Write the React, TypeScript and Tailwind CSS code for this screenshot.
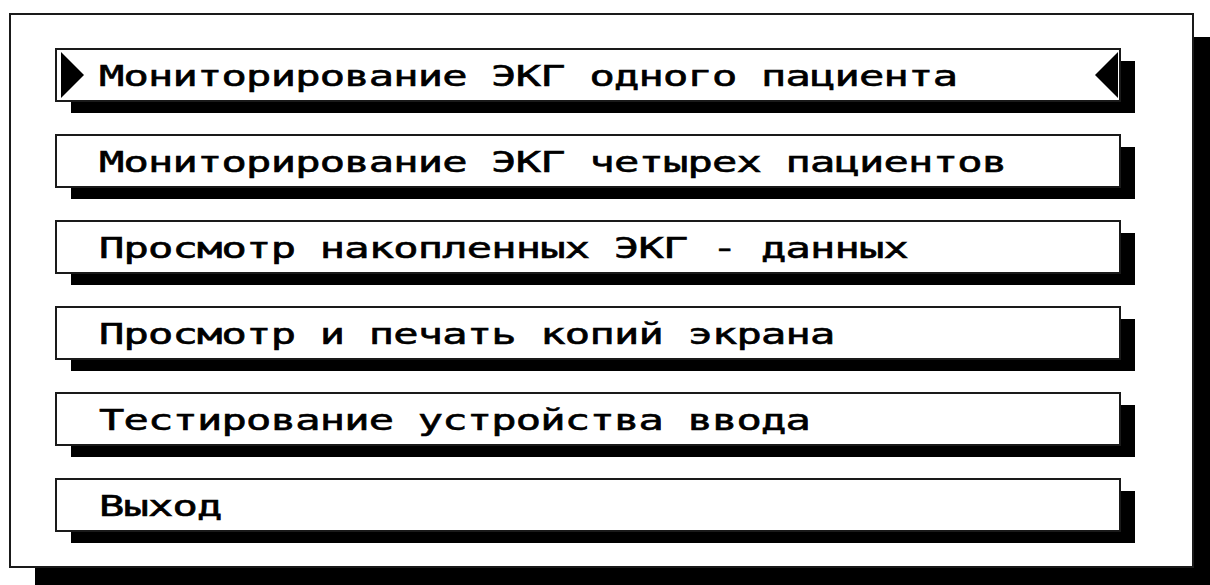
import React from "react";

// Main menu of the ECG monitoring program
const items: string[] = [
  "Мониторирование ЭКГ одного пациента",
  "Мониторирование ЭКГ четырех пациентов",
  "Просмотр накопленных ЭКГ - данных",
  "Просмотр и печать копий экрана",
  "Тестирование устройства ввода",
  "Выход",
];

// little arrow that marks the selected row, pointing right or left
const Marker: React.FC<{ side: "left" | "right" }> = ({ side }) => (
  <svg
    width="23"
    height="46"
    viewBox="0 0 23 46"
    className={
      side === "left"
        ? "absolute left-[4px] top-1/2 -translate-y-1/2"
        : "absolute right-[1px] top-1/2 -translate-y-1/2"
    }
  >
    {side === "left" ? (
      <polygon points="0,0 23,23 0,46" fill="#000" />
    ) : (
      <polygon points="23,0 0,23 23,46" fill="#000" />
    )}
  </svg>
);

const MenuButton: React.FC<{ label: string; selected?: boolean }> = ({
  label,
  selected,
}) => (
  <div className="relative flex h-[54px] w-[1066px] items-center border-2 border-[#1a1a1a] bg-white pl-[42px] pt-[3px] shadow-[15px_12px_0_-1px_#000]">
    {selected && <Marker side="left" />}
    <span className="origin-left scale-x-[1.45] whitespace-pre font-['DejaVu_Sans_Mono',monospace] text-[29px] font-normal leading-none tracking-[-0.55px] text-black [-webkit-text-stroke:0.6px_#000]">
      {label}
    </span>
    {selected && <Marker side="right" />}
  </div>
);

export default function App() {
  return (
    <div className="h-[585px] w-[1210px] overflow-hidden bg-white pl-[9px] pt-[13px]">
      {/* outer window with its heavy drop shadow */}
      <div className="h-[555px] w-[1185px] border-2 border-[#1a1a1a] bg-white pl-[44px] pt-[33px] shadow-[26px_24px_0_0_#000]">
        <div className="flex flex-col gap-[32px]">
          {items.map((label, i) => (
            <MenuButton key={label} label={label} selected={i === 0} />
          ))}
        </div>
      </div>
    </div>
  );
}
